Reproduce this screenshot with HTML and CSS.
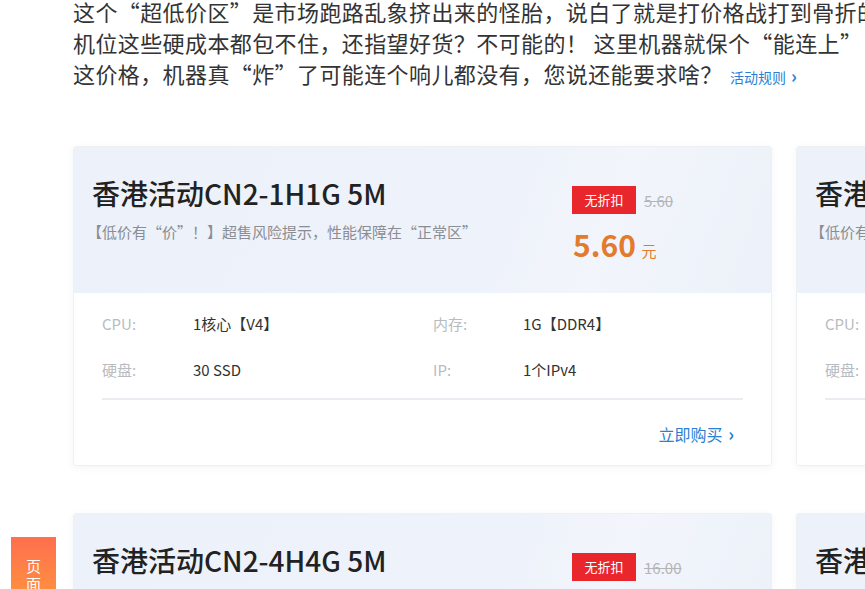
FILE: index.html
```html
<!DOCTYPE html>
<html lang="zh-CN">

<head>
    <meta charset="UTF-8">
    <meta name="viewport" content="width=device-width, initial-scale=1.0">
    <title>低价专区</title>
    <link rel="stylesheet" href="styles.css">
</head>

<body>
    <div class="page">
        <p class="intro">
            这个“超低价区”是市场跑路乱象挤出来的怪胎，说白了就是打价格战打到骨折的<br>
            机位这些硬成本都包不住，还指望好货？不可能的！ 这里机器就保个“能连上”<br>
            这价格，机器真“炸”了可能连个响儿都没有，您说还能要求啥？
            <a class="rule-link" href="#">活动规则 <span class="arrow">›</span></a>
        </p>

        <div class="card-grid">
            <div class="card">
                <div class="card-head">
                    <div class="card-title">
                        <h3>香港活动CN2-1H1G 5M</h3>
                        <p class="tip">【低价有“价”！】超售风险提示，性能保障在“正常区”</p>
                    </div>
                    <div class="price-box">
                        <div class="price-top">
                            <span class="badge">无折扣</span>
                            <span class="old-price">5.60</span>
                        </div>
                        <div class="price"><b>5.60</b> <span>元</span></div>
                    </div>
                </div>
                <div class="card-body">
                    <div class="spec">
                        <span class="spec-name">CPU:</span><span class="spec-val">1核心【V4】</span>
                        <span class="spec-name">内存:</span><span class="spec-val">1G【DDR4】</span>
                        <span class="spec-name">硬盘:</span><span class="spec-val">30 SSD</span>
                        <span class="spec-name">IP:</span><span class="spec-val">1个IPv4</span>
                    </div>
                    <div class="card-foot">
                        <a class="buy-btn" href="#">立即购买 <span class="arrow">›</span></a>
                    </div>
                </div>
            </div>

            <div class="card">
                <div class="card-head">
                    <div class="card-title">
                        <h3>香港活动CN2-1H2G 5M</h3>
                        <p class="tip">【低价有“价”！】超售风险提示，性能保障在“正常区”</p>
                    </div>
                    <div class="price-box">
                        <div class="price-top">
                            <span class="badge">无折扣</span>
                            <span class="old-price">8.80</span>
                        </div>
                        <div class="price"><b>8.80</b> <span>元</span></div>
                    </div>
                </div>
                <div class="card-body">
                    <div class="spec">
                        <span class="spec-name">CPU:</span><span class="spec-val">1核心【V4】</span>
                        <span class="spec-name">内存:</span><span class="spec-val">2G【DDR4】</span>
                        <span class="spec-name">硬盘:</span><span class="spec-val">30 SSD</span>
                        <span class="spec-name">IP:</span><span class="spec-val">1个IPv4</span>
                    </div>
                    <div class="card-foot">
                        <a class="buy-btn" href="#">立即购买 <span class="arrow">›</span></a>
                    </div>
                </div>
            </div>

            <div class="card">
                <div class="card-head">
                    <div class="card-title">
                        <h3>香港活动CN2-4H4G 5M</h3>
                        <p class="tip">【低价有“价”！】超售风险提示，性能保障在“正常区”</p>
                    </div>
                    <div class="price-box">
                        <div class="price-top">
                            <span class="badge">无折扣</span>
                            <span class="old-price">16.00</span>
                        </div>
                        <div class="price"><b>16.00</b> <span>元</span></div>
                    </div>
                </div>
            </div>

            <div class="card">
                <div class="card-head">
                    <div class="card-title">
                        <h3>香港活动CN2-4H8G 5M</h3>
                        <p class="tip">【低价有“价”！】超售风险提示，性能保障在“正常区”</p>
                    </div>
                </div>
            </div>
        </div>
    </div>

    <!-- floating side tab -->
    <div class="side-tab">页面</div>
</body>

</html>
```

FILE: styles.css
```css
        /* page */
        html,
        body {
            margin: 0;
            padding: 0;
            background-color: #fff;
            overflow: hidden;
            height: 589px;
            font-family: "Noto Sans CJK SC", "Noto Sans", sans-serif;
            color: #333;
        }

        .page {
            padding-left: 73px;
            margin-top: -4px;
        }

        .intro {
            margin: 0;
            font-size: 22px;
            line-height: 31px;
            letter-spacing: 0.4px;
            color: #333;
            white-space: nowrap;
        }

        .rule-link {
            font-size: 14px;
            letter-spacing: 0;
            color: #2b7fd4;
            text-decoration: none;
            margin-left: 2px;
        }

        .arrow {
            font-weight: bold;
            font-size: 18px;
            margin-left: 2px;
        }

        /* cards */
        .card-grid {
            display: grid;
            grid-template-columns: 699px 699px;
            column-gap: 24px;
            row-gap: 47px;
            margin-top: 53px;
        }

        .card {
            border: 1px solid #eef0f4;
            border-radius: 3px;
            box-shadow: 0 2px 8px rgba(30, 50, 90, 0.05);
            background-color: white;
            overflow: hidden;
        }

        .card-head {
            display: flex;
            justify-content: space-between;
            height: 146px;
            box-sizing: border-box;
            padding: 27px 20px 0 18px;
            background: linear-gradient(110deg, #edf1f9 0%, #eef2fa 60%, #f2f5fb 75%, #ecf1f9 100%);
        }

        .card-title h3 {
            margin: 0;
            font-size: 28px;
            font-weight: 500;
            line-height: 38px;
            color: #222;
        }

        .tip {
            margin: 9px 0 0 -5px;
            font-size: 15px;
            line-height: 22px;
            color: #8a8d93;
        }

        .price-box {
            width: 179px;
            padding-top: 12px;
        }

        .price-top {
            display: flex;
            align-items: center;
        }

        .badge {
            display: inline-block;
            width: 64px;
            height: 28px;
            line-height: 28px;
            text-align: center;
            background-color: #e9262c;
            color: white;
            font-size: 13px;
        }

        .old-price {
            margin-left: 8px;
            font-size: 15px;
            color: #b3b5b9;
            text-decoration: line-through;
        }

        .price {
            margin-top: 13px;
            color: #e27b2d;
            line-height: 34px;
            padding-left: 1px;
        }

        .price b {
            font-size: 30px;
            font-weight: 600;
        }

        .price span {
            font-size: 15px;
            margin-left: 2px;
        }

        .card-body {
            padding: 20px 28px 20px 28px;
        }

        .spec {
            display: grid;
            grid-template-columns: 91px 240px 90px auto;
            row-gap: 25px;
            font-size: 15px;
            line-height: 21px;
            padding-bottom: 18px;
            border-bottom: 2px solid #e9ecf1;
        }

        .spec-name {
            color: #b8bbc0;
        }

        .spec-val {
            color: #333;
        }

        .card-foot {
            display: flex;
            justify-content: flex-end;
            padding-top: 22px;
        }

        .buy-btn {
            font-size: 16px;
            line-height: 22px;
            color: #2b7fd4;
            text-decoration: none;
            margin-right: 9px;
        }

        /* left floating tab */
        .side-tab {
            position: fixed;
            left: 11px;
            top: 537px;
            width: 45px;
            height: 80px;
            background: linear-gradient(180deg, #ff6f4e 0%, #ff9c3a 100%);
            color: white;
            font-size: 15px;
            writing-mode: vertical-rl;
            text-align: start;
            line-height: 45px;
            padding-top: 22px;
            box-sizing: border-box;
            letter-spacing: 3px;
        }
```
